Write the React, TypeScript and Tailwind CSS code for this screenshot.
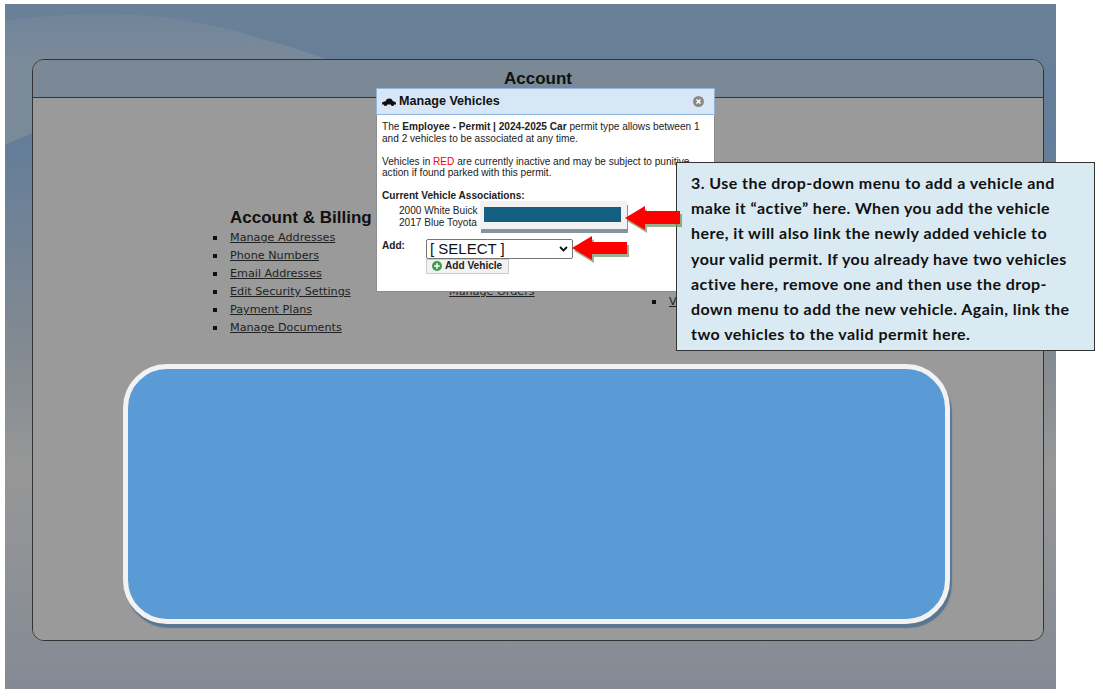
const accountLinks = ['Manage Addresses', 'Phone Numbers', 'Email Addresses', 'Edit Security Settings', 'Payment Plans', 'Manage Documents'];

function LinkItem({ label }: { label: string }) {
  return (
    <li className="relative h-[18px] leading-[18px]">
      <span className="absolute left-[-17px] top-[7px] h-[4px] w-[4px] bg-[#111]" />
      <a className="underline text-[#222]">{label}</a>
    </li>
  );
}

function Arrow({ className, width, height, points }: { className: string; width: number; height: number; points: string }) {
  return (
    <svg className={className} width={width} height={height} viewBox={`0 0 ${width} ${height}`}>
      <polygon points={points} fill="#6f8f5f" fillOpacity="0.7" transform="translate(2 3)" />
      <polygon points={points} fill="#fe0000" />
    </svg>
  );
}

export default function App() {
  return (
    <div className="relative h-[696px] w-[1103px] overflow-hidden bg-white pl-[5px] pt-[4px] font-['Liberation_Sans',sans-serif]">
      {/* backdrop */}
      <div className="relative h-[685px] w-[1051px] overflow-hidden bg-[linear-gradient(to_bottom,#6b8098_0%,#647d9a_20%,#828a91_50%,#979797_68%,#848a94_100%)] pl-[27px] pt-[55px]">
        <svg className="absolute left-0 top-0" width="1051" height="200" viewBox="0 0 1051 200">
          <defs>
            <linearGradient id="wave" x1="0" y1="0" x2="0" y2="1">
              <stop offset="0" stopColor="#70859b" />
              <stop offset="0.35" stopColor="#7b8a99" />
            </linearGradient>
          </defs>
          <path d="M0 17 C60 8 140 8 190 18 C240 28 285 42 335 60 L335 100 L27 129 L0 141 Z" fill="url(#wave)" />
        </svg>

        {/* account panel */}
        <div className="relative h-[582px] w-[1012px] overflow-hidden rounded-[12px] border border-[#333]">
          <div className="h-[38px] border-b border-[#333] bg-[#7b8996] pt-[9px] text-center text-[17px] font-bold leading-[20px] text-[#111]">Account</div>
          <div className="flex h-[543px] bg-[#9a9a9a] pl-[197px] pt-[108px] font-['DejaVu_Sans',sans-serif] text-[11.2px]">
            <div className="w-[219px]">
              <h2 className="h-[23px] font-['Liberation_Sans',sans-serif] text-[17px] font-bold leading-[24px] text-[#111]">Account &amp; Billing</h2>
              <ul>
                {accountLinks.map((label) => (
                  <LinkItem key={label} label={label} />
                ))}
              </ul>
            </div>
            <div className="w-[220px] pt-[77px] leading-[18px]">
              <a className="underline text-[#222]">Manage Orders</a>
            </div>
            <div className="pt-[87px]">
              <ul>
                <LinkItem label="Vehicles" />
              </ul>
            </div>
          </div>
        </div>
      </div>

      {/* manage vehicles dialog */}
      <div className="absolute left-[376px] top-[88px] h-[204px] w-[339px] border border-[#8c8c8c] bg-white text-[10.1px] leading-[11.5px] text-[#222]">
        <div className="-mx-px -mt-px flex h-[27px] items-center border border-[#8fb4dd] bg-[#d8e7f6] pl-[5px] pr-[10px]">
          <svg width="14" height="8" viewBox="0 0 14 8" className="mr-[3px]">
            <path d="M0 5.5 C0 4 1.5 3.5 3.5 3.2 L5 1 C6 0.3 8.5 0.3 9.5 1 L11 3.2 C13 3.4 14 4 14 5.5 L14 6.5 H0 Z" fill="#111" />
            <circle cx="3.5" cy="6.4" r="1.6" fill="#111" />
            <circle cx="10.5" cy="6.4" r="1.6" fill="#111" />
          </svg>
          <span className="text-[12.6px] font-bold text-[#111]">Manage Vehicles</span>
          <svg width="11" height="11" viewBox="0 0 11 11" className="ml-auto">
            <circle cx="5.5" cy="5.5" r="5.5" fill="#8a8a8a" />
            <path d="M3.5 3.5 L7.5 7.5 M7.5 3.5 L3.5 7.5" stroke="#fff" strokeWidth="1.5" />
          </svg>
        </div>
        <div className="pl-[5px] pr-[4px] pt-[6px]">
          <p>
            The <b>Employee - Permit | 2024-2025 Car</b> permit type allows between 1 and 2 vehicles to be associated at any time.
          </p>
          <p className="mt-[11.5px]">
            Vehicles in <span className="text-[#f00]">RED</span> are currently inactive and may be subject to punitive action if found parked with this permit.
          </p>
          <p className="mt-[11.5px] font-bold">Current Vehicle Associations:</p>
          <div className="pl-[17px] pt-[3px] leading-[12px]">
            <div>2000 White Buick</div>
            <div>2017 Blue Toyota</div>
          </div>
          <div className="mt-[11px] flex">
            <span className="w-[44px] font-bold">Add:</span>
            <div className="-mt-px">
              <div className="flex h-[20px] w-[147px] items-center justify-between rounded-[2px] border border-[#767676] bg-white pl-[3px] pr-[4px] text-[15px] leading-[18px] text-[#111]">
                <span>[ SELECT ]</span>
                <svg width="9" height="6" viewBox="0 0 9 6">
                  <path d="M1 1 L4.5 4.5 L8 1" fill="none" stroke="#111" strokeWidth="1.8" />
                </svg>
              </div>
              <div className="flex h-[15px] w-[83px] items-center gap-[3px] border border-[#ccc] bg-[#f3f3f3] pl-[5px] font-bold text-[#222]">
                <svg width="10" height="10" viewBox="0 0 10 10">
                  <circle cx="5" cy="5" r="5" fill="#3f9b4a" />
                  <path d="M5 2.2 V7.8 M2.2 5 H7.8" stroke="#fff" strokeWidth="1.6" />
                </svg>
                Add Vehicle
              </div>
            </div>
          </div>
        </div>
      </div>

      {/* redaction over the vehicle actions */}
      <div className="absolute left-[480px] top-[201px] h-[28px] w-[147px] bg-[#f2f2f2] pl-[4px] pt-[6px] shadow-[1px_4px_0_#84959f]">
        <div className="h-[15px] w-[137px] bg-[#156082]" />
      </div>

      {/* callout */}
      <div className="absolute left-[676px] top-[162px] h-[189px] w-[419px] border border-[#333] bg-[#daeaf2] pl-[14px] pt-[7px] font-['Lato',sans-serif] text-[16px] font-bold leading-[25.2px] tracking-[0.45px] text-[#111]">
        <p>3. Use the drop-down menu to add a vehicle and</p>
        <p>make it “active” here. When you add the vehicle</p>
        <p>here, it will also link the newly added vehicle to</p>
        <p>your valid permit. If you already have two vehicles</p>
        <p>active here, remove one and then use the drop-</p>
        <p>down menu to add the new vehicle. Again, link the</p>
        <p>two vehicles to the valid permit here.</p>
      </div>

      <Arrow className="absolute left-[625px] top-[205px]" width={58} height={28} points="0,13 20,1 20,6 55,6 55,19 20,19 20,25" />
      <Arrow className="absolute left-[572px] top-[235px]" width={58} height={29} points="0,13 20,1 20,7 55,7 55,19 20,19 20,25" />

      {/* blue rounded cover */}
      <div className="absolute left-[123px] top-[364px] h-[260px] w-[827px] rounded-[44px] border-[5px] border-[#f2f2f2] bg-[#5b9bd5] shadow-[2px_4px_1px_#5a7690]" />
    </div>
  );
}
